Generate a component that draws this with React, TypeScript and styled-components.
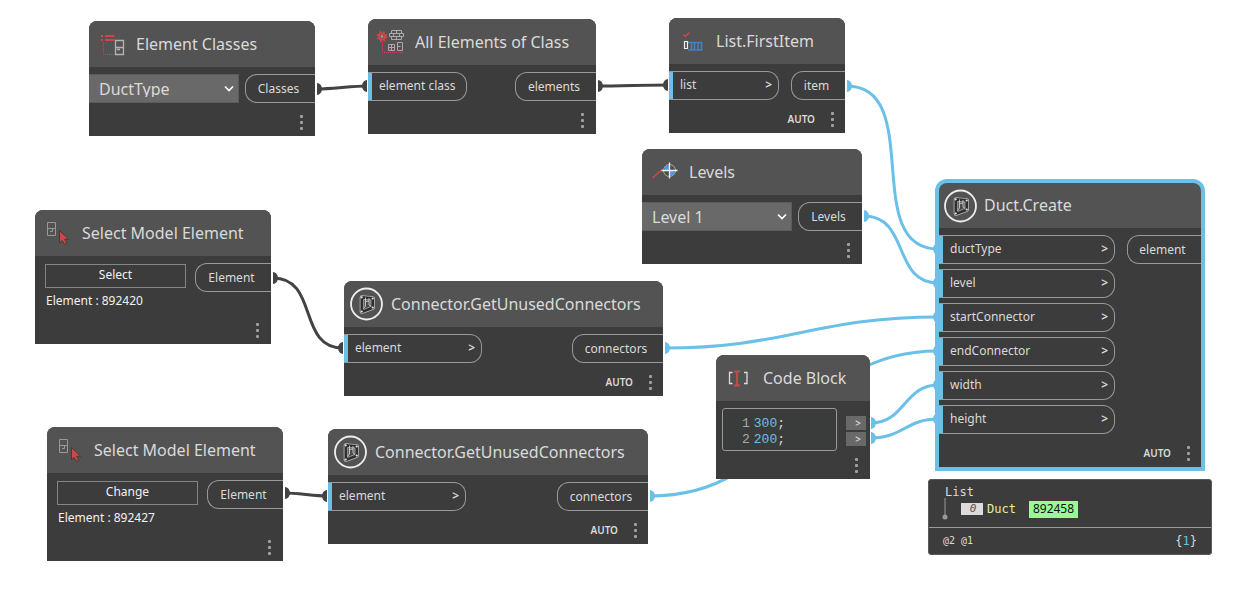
import React from "react";
import styled, { createGlobalStyle } from "styled-components";

const colors = {
  header: "#535353",
  body: "#3c3c3c",
  field: "#696969",
  line: "#999999",
  text: "#dadada",
  blue: "#6ac0e7",
  wire: "#434343",
  red: "#cb4848",
};

const GlobalStyle = createGlobalStyle`
  * { box-sizing: border-box; }
  body {
    margin: 0;
    background: #fff;
    color: ${colors.text};
    font-family: "Noto Sans", sans-serif;
    font-size: 12px;
    line-height: 16px;
  }
  button, select { font: inherit; color: inherit; margin: 0; }
`;

const Canvas = styled.main`
  position: relative;
  width: 100%;
  min-height: 100vh;
  overflow: hidden;
`;

const WireLayer = styled.svg`
  position: absolute;
  inset: 0;
  width: 100%;
  height: 100%;
  fill: none;
`;

const NodeBox = styled.section<{ $x: number; $y: number; $w: number; $selected?: boolean }>`
  position: absolute;
  left: ${(p) => p.$x}px;
  top: ${(p) => p.$y}px;
  width: ${(p) => p.$w}px;
  background: ${(p) => (p.$selected ? colors.blue : colors.body)};
  border: ${(p) => (p.$selected ? `4px solid ${colors.blue}` : "0")};
  border-radius: ${(p) => (p.$selected ? "12px 12px 0 0" : "8px 8px 0 0")};
`;

const Header = styled.header<{ $tight?: boolean }>`
  display: flex;
  align-items: center;
  gap: ${(p) => (p.$tight ? 5 : 6)}px;
  height: ${(p) => (p.$tight ? 45 : 46)}px;
  padding-left: ${(p) => (p.$tight ? 5 : 6)}px;
  background: ${colors.header};
  border-radius: 8px 8px 0 0;
`;

const Title = styled.h2`
  margin: 0;
  padding-bottom: 1px;
  font-size: 16px;
  font-weight: 400;
  line-height: 24px;
  white-space: nowrap;
`;

const Body = styled.div<{ $compact?: boolean }>`
  display: flex;
  justify-content: space-between;
  align-items: flex-start;
  padding: 7px 0 ${(p) => (p.$compact ? 0 : 5)}px;
  background: ${colors.body};
`;

const PortColumn = styled.div`
  display: flex;
  flex-direction: column;
  gap: 5px;
`;

const InPort = styled.button<{ $w: number }>`
  display: flex;
  align-items: center;
  justify-content: space-between;
  width: ${(p) => p.$w}px;
  height: 29px;
  padding: 0 6px 2px 11px;
  background: transparent;
  border: 1px solid ${colors.line};
  border-left: 0;
  border-radius: 0 12px 12px 0;
  box-shadow: inset 4px 0 0 ${colors.blue};
`;

const Arrow = styled.span`
  font-weight: 600;
`;

const OutPort = styled.button<{ $w: number }>`
  width: ${(p) => p.$w}px;
  height: 29px;
  padding: 0 4px 0 0;
  background: transparent;
  border: 1px solid ${colors.line};
  border-right: 0;
  border-radius: 12px 0 0 12px;
  text-align: center;
`;

const Footer = styled.footer<{ $auto?: boolean }>`
  display: flex;
  align-items: center;
  justify-content: flex-end;
  gap: 16px;
  height: 28px;
  padding-right: ${(p) => (p.$auto ? 11 : 12)}px;
  background: ${colors.body};
  font-size: 10px;
  font-weight: 600;
`;

const MenuButton = styled.button`
  display: flex;
  flex-direction: column;
  gap: 3px;
  padding: 0;
  border: 0;
  background: transparent;

  i {
    width: 3px;
    height: 3px;
    border-radius: 1px;
    background: #a0a0a0;
  }
`;

const Picker = styled.label`
  display: flex;
  align-items: center;
  position: relative;
  width: 150px;
  height: 29px;

  select {
    width: 100%;
    height: 29px;
    padding: 0 28px 0 10px;
    appearance: none;
    background: ${colors.field};
    border: 1px solid #5c5c5c;
    border-left: 0;
    border-radius: 0;
    font-size: 16px;
  }
  svg {
    position: absolute;
    right: 5px;
    pointer-events: none;
  }
`;

const Selection = styled.div`
  display: flex;
  flex-direction: column;
  gap: 5px;
  width: 151px;
  height: 48px;
  padding: 1px 0 0 10px;
  color: #f2f2f2;

  p { margin: 0; padding-left: 1px; }
`;

const SelectButton = styled.button`
  flex: none;
  height: 24px;
  padding: 0 0 2px;
  background: transparent;
  border: 1px solid #858585;
`;

const Editor = styled.div`
  display: flex;
  width: 115px;
  height: 43px;
  margin-left: 6px;
  padding: 7px 0 0 19px;
  border: 1px solid ${colors.line};
  border-radius: 3px;
  background: #393c3a;
  font-family: "Liberation Mono", monospace;
  font-size: 13px;

  ol { margin: 0; padding: 0; list-style: none; }
  ol + ol { padding-left: 4px; color: ${colors.text}; }
  b { color: ${colors.blue}; font-weight: 400; }
`;

const LineNumbers = styled.ol`
  color: #a8a8a8;
`;

const CodePorts = styled.div`
  display: flex;
  flex-direction: column;
  gap: 2px;
  padding: 8px 4px 0 0;
`;

const CodePort = styled.button`
  display: flex;
  align-items: center;
  justify-content: center;
  width: 20px;
  height: 14px;
  padding: 0 0 0 4px;
  border: 0;
  background: ${colors.field};
  font-size: 10px;
  font-weight: 600;
`;

const Preview = styled.aside`
  position: absolute;
  left: 928px;
  top: 479px;
  width: 284px;
  background: ${colors.body};
  border: 1px solid #5a5a5a;
  border-radius: 3px;
  font-family: "DejaVu Sans Mono", monospace;
  font-size: 12px;
`;

const PreviewTree = styled.div`
  height: 48px;
  padding: 4px 16px 0;
  border-bottom: 1px solid ${colors.line};
`;

const TreeRow = styled.div`
  display: flex;
  align-items: center;
  height: 18px;
  color: #eded9f;
`;

const Branch = styled.svg`
  width: 6px;
  height: 22px;
  margin-left: -3px;
`;

const Index = styled.i`
  width: 22px;
  height: 12px;
  margin: 0 4px 0 13px;
  padding-left: 2px;
  background: #dcdcdc;
  color: #555;
  font-size: 11px;
  line-height: 12px;
  text-align: center;
`;

const ElementLink = styled.a`
  height: 17px;
  margin-left: 13px;
  padding: 0 4px;
  background: #98fb98;
  color: #111;
  font-family: "Noto Sans", sans-serif;
  line-height: 16px;
  text-decoration: none;
`;

const PreviewFooter = styled.div`
  display: flex;
  align-items: center;
  justify-content: space-between;
  height: 26px;
  padding: 0 14px;

  small { font-size: 10px; }
  b { color: ${colors.blue}; font-weight: 400; }
`;

const IconBox = styled.svg`
  flex: none;
  width: 35px;
  height: 34px;
  fill: none;
`;

const ElementClassesIcon = () => (
  <IconBox viewBox="0 0 35 34">
    <path d="M6 9h2M10 9h9.500M6 13h2M10 13h9.500" stroke={colors.red} strokeWidth="2" />
    <path d="M8.500 15v12.500H19" stroke={colors.red} strokeDasharray="1 1" />
    <path d="M20.500 13.500h8v14h-8zM20.500 20.500h8M22 22.500h3" stroke="#b4b4b4" strokeWidth="1.300" />
  </IconBox>
);

const AllElementsIcon = () => (
  <IconBox viewBox="0 0 35 34">
    <circle cx="8" cy="11.500" r="3" stroke={colors.red} strokeWidth="2" />
    <circle cx="8" cy="11.500" r="4.600" stroke={colors.red} strokeWidth="1.800" strokeDasharray="1.800 1.900" />
    <circle cx="8" cy="11.500" r="1.400" fill="#999" />
    <path d="M8.500 17v10.500H29" stroke={colors.red} strokeDasharray="1 1" />
    <path d="M17.500 5.500h10v3h-10zM15.500 8.500h14v3h-14zM17.500 11.500h10v3h-10zM22.500 5.500v3M19.500 8.500v3M25.500 8.500v3M22.500 11.500v3" stroke="#aaa" />
    <path d="M14.500 19.500h6v6h-6zM17.500 19.500v6M14.500 22.500h6M23.500 17.500h5v8h-5zM23.500 21.500h3" stroke="#aaa" />
  </IconBox>
);

const FirstItemIcon = () => (
  <IconBox viewBox="0 0 35 34">
    <path d="M8.500 10.500l2 2 4-4" stroke={colors.red} strokeWidth="1.500" />
    <path d="M13 18.500h13.500v7.500H13M16.500 18.500V26M19.500 18.500V26M23 18.500V26" stroke="#3f85c6" strokeWidth="1.600" />
    <path d="M9.500 17.500h3v7h-3z" stroke="#eee" strokeWidth="1.200" />
  </IconBox>
);

const LevelsIcon = () => (
  <IconBox viewBox="0 0 35 34">
    <path d="M4.500 23L14 14.500" stroke={colors.red} strokeWidth="1.500" />
    <circle cx="21.500" cy="15.500" r="6" fill="#505050" stroke="#aaa" />
    <path d="M21.500 15.500V10a5.500 5.500 0 0 0-5.500 5.500zM21.500 15.500V21a5.500 5.500 0 0 0 5.500-5.500z" fill="#4a9be8" />
    <path d="M21.500 7.500v16M13.500 15.500h16" stroke="#eee" strokeWidth="1.300" />
  </IconBox>
);

const SelectElementIcon = () => (
  <IconBox viewBox="0 0 35 34">
    <path d="M6.500 6.500h8v13h-8zM6.500 12.500h8M11.500 12.500v3h-2.500" stroke="#999" />
    <path d="M18.500 14.500v12.500l2.600-2.600 2.400 4.100 2.200-1-2-4.200h4z" fill={colors.red} stroke="#353535" strokeWidth=".8" />
  </IconBox>
);

const CodeBlockIcon = () => (
  <IconBox viewBox="0 0 35 34">
    <path d="M10.500 11.500h-3v11h3M22 11.500h3v11h-3" stroke="#ddd" strokeWidth="1.300" />
    <path d="M15 10v15M12 10.500h6M12 24.500h6" stroke={colors.red} strokeWidth="1.800" />
  </IconBox>
);

const PackageIcon = () => (
  <IconBox viewBox="0 0 35 34">
    <circle cx="16.500" cy="17" r="15.500" stroke="#eee" strokeWidth="1.800" />
    <path d="M12 10.500l10.700 1v9L12 24.500z" stroke="#bdbdbd" strokeWidth="4.600" strokeLinejoin="round" />
    <path d="M12 10.500l10.700 1v9L12 24.500z" stroke="#2e2e2e" strokeWidth="3" strokeLinejoin="round" />
    <path d="M13.800 12.500l7 .500v6.500l-7 3z" fill="#4a4a4a" stroke="#a8a8a8" strokeWidth=".8" />
    <path d="M15.500 10.500v8.500M19 11v7M15.500 14.500l3.500-.500M15.500 19l-2 2.500M19 18l2 1.500" stroke="#cfcfcf" strokeWidth=".9" />
    <g fill="#e6e6e6">
      <circle cx="11.700" cy="10.300" r="1.100" />
      <circle cx="22.700" cy="11.500" r="1.100" />
      <circle cx="11.700" cy="24.500" r="1.100" />
      <circle cx="22.700" cy="20.500" r="1.100" />
    </g>
  </IconBox>
);

type Frame = { x: number; y: number; w: number };

type NodeProps = Frame & {
  title: string;
  icon: React.ReactNode;
  auto?: boolean;
  selected?: boolean;
  compact?: boolean;
  children: React.ReactNode;
};

const GraphNode = ({ x, y, w, title, icon, auto, selected, compact, children }: NodeProps) => (
  <NodeBox $x={x} $y={y} $w={w} $selected={selected}>
    <Header $tight={selected}>
      {icon}
      <Title>{title}</Title>
    </Header>
    <Body $compact={compact}>{children}</Body>
    <Footer $auto={auto}>
      {auto && <span>AUTO</span>}
      <MenuButton aria-label={`${title} options`}>
        <i />
        <i />
        <i />
      </MenuButton>
    </Footer>
  </NodeBox>
);

const Input = ({ label, w, plain }: { label: string; w: number; plain?: boolean }) => (
  <InPort $w={w}>
    <span>{label}</span>
    {!plain && <Arrow>&gt;</Arrow>}
  </InPort>
);

const Dropdown = ({ name, value }: { name: string; value: string }) => (
  <Picker>
    <select aria-label={name} defaultValue={value}>
      <option>{value}</option>
    </select>
    <svg width="10" height="8" viewBox="0 0 10 8" fill="none">
      <path d="M1 1.500l4 4 4-4" stroke="#fff" strokeWidth="1.600" />
    </svg>
  </Picker>
);

const SelectModelElement = ({ x, y, w, action, id }: Frame & { action: string; id: string }) => (
  <GraphNode x={x} y={y} w={w} title="Select Model Element" icon={<SelectElementIcon />}>
    <Selection>
      <SelectButton>{action}</SelectButton>
      <p>Element : {id}</p>
    </Selection>
    <OutPort $w={76}>Element</OutPort>
  </GraphNode>
);

const UnusedConnectors = (frame: Frame) => (
  <GraphNode {...frame} title="Connector.GetUnusedConnectors" icon={<PackageIcon />} auto>
    <Input label="element" w={138} />
    <OutPort $w={91}>connectors</OutPort>
  </GraphNode>
);

type WireData = { from: [number, number]; to: [number, number]; bend: number; dark?: boolean };

const wires: WireData[] = [
  { from: [317, 89], to: [367, 86], bend: 14, dark: true },
  { from: [598, 86], to: [668, 85], bend: 20, dark: true },
  { from: [847, 86], to: [938, 249], bend: 78 },
  { from: [864, 216], to: [938, 283], bend: 46 },
  { from: [273, 278], to: [343, 348], bend: 46, dark: true },
  { from: [665, 348], to: [938, 317], bend: 120 },
  { from: [650, 496], to: [938, 351], bend: 144 },
  { from: [871, 423], to: [938, 385], bend: 34 },
  { from: [871, 438], to: [938, 419], bend: 32 },
  { from: [285, 493], to: [327, 496], bend: 12, dark: true },
];

const Wire = ({ from: [x1, y1], to: [x2, y2], bend, dark }: WireData) => {
  const color = dark ? colors.wire : colors.blue;
  return (
    <g>
      <path d={`M${x1} ${y1}C${x1 + bend} ${y1} ${x2 - bend} ${y2} ${x2} ${y2}`} stroke={color} strokeWidth="3" />
      <path d={`M${x1} ${y1 - 6}a5 6 0 0 1 0 12zM${x2} ${y2 - 6}a5 6 0 0 0 0 12z`} fill={color} />
    </g>
  );
};

const ductInputs = ["ductType", "level", "startConnector", "endConnector", "width", "height"];

export default function App() {
  return (
    <Canvas>
      <GlobalStyle />
      <WireLayer>
        {wires.map((wire) => (
          <Wire key={wire.from.join()} {...wire} />
        ))}
      </WireLayer>

      <GraphNode x={89} y={21} w={226} title="Element Classes" icon={<ElementClassesIcon />}>
        <Dropdown name="Element class" value="DuctType" />
        <OutPort $w={70}>Classes</OutPort>
      </GraphNode>

      <GraphNode x={368} y={19} w={228} title="All Elements of Class" icon={<AllElementsIcon />}>
        <Input label="element class" w={99} plain />
        <OutPort $w={81}>elements</OutPort>
      </GraphNode>

      <GraphNode x={669} y={18} w={176} title="List.FirstItem" icon={<FirstItemIcon />} auto>
        <Input label="list" w={110} />
        <OutPort $w={54}>item</OutPort>
      </GraphNode>

      <GraphNode x={642} y={149} w={220} title="Levels" icon={<LevelsIcon />}>
        <Dropdown name="Level" value="Level 1" />
        <OutPort $w={64}>Levels</OutPort>
      </GraphNode>

      <SelectModelElement x={35} y={210} w={236} action="Select" id="892420" />
      <UnusedConnectors x={344} y={281} w={319} />
      <SelectModelElement x={47} y={427} w={236} action="Change" id="892427" />
      <UnusedConnectors x={328} y={429} w={320} />

      <GraphNode x={716} y={355} w={154} title="Code Block" icon={<CodeBlockIcon />} compact>
        <Editor>
          <LineNumbers>
            <li>1</li>
            <li>2</li>
          </LineNumbers>
          <ol>
            <li><b>300</b>;</li>
            <li><b>200</b>;</li>
          </ol>
        </Editor>
        <CodePorts>
          <CodePort>&gt;</CodePort>
          <CodePort>&gt;</CodePort>
        </CodePorts>
      </GraphNode>

      <GraphNode x={935} y={179} w={270} title="Duct.Create" icon={<PackageIcon />} auto selected>
        <PortColumn>
          {ductInputs.map((label) => (
            <Input key={label} label={label} w={176} />
          ))}
        </PortColumn>
        <OutPort $w={74}>element</OutPort>
      </GraphNode>

      <Preview>
        <PreviewTree>
          <div>List</div>
          <TreeRow>
            <Branch viewBox="0 0 6 22">
              <path d="M3 0v18" stroke="#999" />
              <circle cx="3" cy="19" r="2.500" fill="#999" />
            </Branch>
            <Index>0</Index>
            <span>Duct</span>
            <ElementLink href="#892458">892458</ElementLink>
          </TreeRow>
        </PreviewTree>
        <PreviewFooter>
          <small>@2 @1</small>
          <span>{"{"}<b>1</b>{"}"}</span>
        </PreviewFooter>
      </Preview>
    </Canvas>
  );
}
